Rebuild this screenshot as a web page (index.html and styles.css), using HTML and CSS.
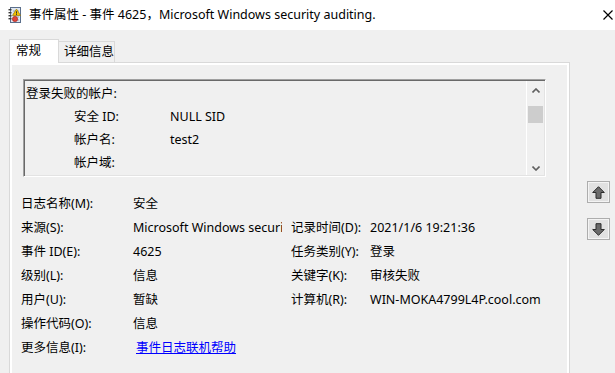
FILE: index.html
```html
<!DOCTYPE html>
<html lang="zh-CN">
<head>
<meta charset="utf-8">
<title>事件属性</title>
<link rel="stylesheet" href="styles.css">
</head>
<body>
<div class="window">
  <div class="titlebar">
    <svg class="app-icon" width="13" height="16" viewBox="0 0 13 16">
      <rect x="2.5" y="0.5" width="10" height="15" fill="#dfe6f0" stroke="#5b6f8c"/>
      <line x1="5" y1="4" x2="11" y2="4" stroke="#8fa3c0"/>
      <line x1="5" y1="7" x2="11" y2="7" stroke="#8fa3c0"/>
      <line x1="5" y1="10" x2="11" y2="10" stroke="#8fa3c0"/>
      <line x1="5" y1="13" x2="11" y2="13" stroke="#8fa3c0"/>
      <rect x="0.5" y="2" width="3" height="1.4" fill="#3a3a3a"/>
      <rect x="0.5" y="5" width="3" height="1.4" fill="#3a3a3a"/>
      <rect x="0.5" y="8" width="3" height="1.4" fill="#3a3a3a"/>
      <rect x="0.5" y="11" width="3" height="1.4" fill="#3a3a3a"/>
      <path d="M8.5 2 L12.5 8.5 L4.5 8.5 Z" fill="#f5c400" stroke="#9c7a00" stroke-width="0.7"/>
      <rect x="8" y="4.3" width="1" height="2.3" fill="#333"/>
      <rect x="8" y="7" width="1" height="0.9" fill="#333"/>
      <circle cx="7" cy="12" r="2.6" fill="#e0443a" stroke="#a32018" stroke-width="0.6"/>
    </svg>
    <span class="title">事件属性 - 事件 4625，Microsoft Windows security auditing.</span>
    <span class="close-btn"><svg width="10" height="10" viewBox="0 0 10 10"><path d="M0.5 0.5 L9.5 9.5 M9.5 0.5 L0.5 9.5" stroke="#000" stroke-width="1.2" fill="none"/></svg></span>
  </div>

  <div class="body">
    <div class="tabbox">
      <div class="tabs">
        <div class="tab active">常规</div>
        <div class="tab">详细信息</div>
      </div>
      <div class="panel">
        <div class="page">
          <div class="desc">
            <div class="desc-text">
              <div class="line">登录失败的帐户:</div>
              <div class="line kv"><span class="k">安全 ID:</span><span class="v">NULL SID</span></div>
              <div class="line kv"><span class="k">帐户名:</span><span class="v">test2</span></div>
              <div class="line kv"><span class="k">帐户域:</span><span class="v"></span></div>
            </div>
            <div class="scrollbar">
              <svg class="chev up" width="8" height="5" viewBox="0 0 8 5"><path d="M0.5 4.5 L4 1 L7.5 4.5" fill="none" stroke="#606060" stroke-width="1.6"/></svg>
              <div class="thumb"></div>
              <div class="track"></div>
              <svg class="chev down" width="8" height="5" viewBox="0 0 8 5"><path d="M0.5 0.5 L4 4 L7.5 0.5" fill="none" stroke="#606060" stroke-width="1.6"/></svg>
            </div>
          </div>

          <div class="fields">
            <span class="lbl">日志名称(M):</span><span class="val">安全</span><span class="lbl2"></span><span class="val2"></span>
            <span class="lbl">来源(S):</span><span class="val"><span class="clip">Microsoft Windows security auditing.</span></span><span class="lbl2">记录时间(D):</span><span class="val2">2021/1/6 19:21:36</span>
            <span class="lbl">事件 ID(E):</span><span class="val">4625</span><span class="lbl2">任务类别(Y):</span><span class="val2">登录</span>
            <span class="lbl">级别(L):</span><span class="val">信息</span><span class="lbl2">关键字(K):</span><span class="val2">审核失败</span>
            <span class="lbl">用户(U):</span><span class="val">暂缺</span><span class="lbl2">计算机(R):</span><span class="val2">WIN-MOKA4799L4P.cool.com</span>
            <span class="lbl">操作代码(O):</span><span class="val">信息</span><span class="lbl2"></span><span class="val2"></span>
            <span class="lbl">更多信息(I):</span><span class="val"><a class="link" href="#">事件日志联机帮助</a></span><span class="lbl2"></span><span class="val2"></span>
          </div>
        </div>
      </div>
    </div>

    <div class="nav">
      <div class="navbtn">
        <svg width="13" height="13" viewBox="0 0 13 13"><path d="M6.5 0.7 L12.3 6.5 L9 6.5 L9 12.3 L4 12.3 L4 6.5 L0.7 6.5 Z" fill="#6a6a6a" stroke="#2b2b2b" stroke-width="1"/></svg>
      </div>
      <div class="navbtn">
        <svg width="13" height="13" viewBox="0 0 13 13"><path d="M6.5 12.3 L12.3 6.5 L9 6.5 L9 0.7 L4 0.7 L4 6.5 L0.7 6.5 Z" fill="#6a6a6a" stroke="#2b2b2b" stroke-width="1"/></svg>
      </div>
    </div>
  </div>
</div>
</body>
</html>
```

FILE: styles.css
```css
* { box-sizing: border-box; }

html, body {
  margin: 0;
  padding: 0;
}

body {
  width: 615px;
  height: 373px;
  overflow: hidden;
  background: #f0f0f0;
  font-family: "Noto Sans", "Noto Sans CJK SC", sans-serif;
  font-size: 12.5px;
  color: #000;
}

.window {
  width: 615px;
  height: 373px;
  display: flex;
  flex-direction: column;
  position: relative;
}

.titlebar {
  height: 30px;
  flex: none;
  background: #fff;
  display: flex;
  align-items: center;
  padding-left: 8px;
}

.app-icon {
  flex: none;
}

.title {
  margin-left: 8px;
  white-space: nowrap;
  line-height: 16px;
}

.close-btn {
  position: absolute;
  right: 2px;
  top: 10px;
  width: 10px;
  height: 10px;
  display: block;
  z-index: 5;
}

.close-btn svg {
  display: block;
}

.body {
  flex: 1;
  display: flex;
  align-items: flex-start;
  padding: 9px 0 0 9px;
  min-height: 0;
}

.tabbox {
  width: 561px;
  flex: none;
  display: flex;
  flex-direction: column;
}

.tabs {
  display: flex;
  align-items: flex-end;
  height: 23px;
  position: relative;
  z-index: 1;
}

.tab {
  height: 21px;
  line-height: 19px;
  padding: 0 0 0 5px;
  width: 56px;
  border: 1px solid #d9d9d9;
  border-left: none;
  border-bottom: none;
  background: #f0f0f0;
  white-space: nowrap;
}

.tab.active {
  height: 24px;
  width: 50px;
  padding: 0 0 0 6px;
  line-height: 21px;
  border-left: 1px solid #d9d9d9;
  background: #fff;
  margin-bottom: -1px;
}

.panel {
  border: 1px solid #d9d9d9;
  background: #fff;
  padding: 2px 2px 0 2px;
  height: 320px;
}

.page {
  background: #f0f0f0;
  height: 100%;
  padding: 14px 0 0 11px;
}

.desc {
  width: 523px;
  height: 98px;
  display: flex;
  border-top: 1px solid #a0a0a0;
  border-left: 1px solid #a0a0a0;
  border-right: 1px solid #fff;
  border-bottom: 1px solid #fff;
  box-shadow: inset 1px 1px 0 #696969, inset -1px -1px 0 #e3e3e3;
  background: #f0f0f0;
}

.desc-text {
  flex: 1;
  padding: 2px 0 0 2px;
}

.line {
  height: 23px;
  line-height: 23px;
  white-space: nowrap;
}

.kv {
  display: flex;
}

.kv .k {
  width: 96px;
  margin-left: 48px;
}

.scrollbar {
  width: 18px;
  flex: none;
  border-left: 1px solid #fff;
  margin: 1px 1px 1px 0;
  display: flex;
  flex-direction: column;
  align-items: center;
  background: #f0f0f0;
}

.chev {
  flex: none;
}

.chev.up {
  margin: 7px 0 13px 0;
}

.chev.down {
  margin: 0 0 4px 0;
}

.thumb {
  width: 15px;
  height: 17px;
  background: #cdcdcd;
  flex: none;
}

.track {
  flex: 1;
}

.fields {
  margin-top: 15px;
  display: grid;
  grid-template-columns: 112px 158px 79px 180px;
  grid-auto-rows: 24px;
  align-items: center;
  margin-left: -2px;
}

.fields > span {
  white-space: nowrap;
  line-height: 24px;
}

.clip {
  display: block;
  width: 149px;
  overflow: hidden;
  white-space: nowrap;
}

.link {
  color: #0000ff;
  text-decoration: underline;
  margin-left: 3px;
}

.nav {
  margin-left: 17px;
  margin-top: 142px;
  display: flex;
  flex-direction: column;
  gap: 15px;
}

.navbtn {
  width: 23px;
  height: 22px;
  border: 1px solid #adadad;
  background: #e1e1e1;
  box-shadow: inset 0 0 0 1px #f4f4f4;
  display: flex;
  align-items: center;
  justify-content: center;
}
```
